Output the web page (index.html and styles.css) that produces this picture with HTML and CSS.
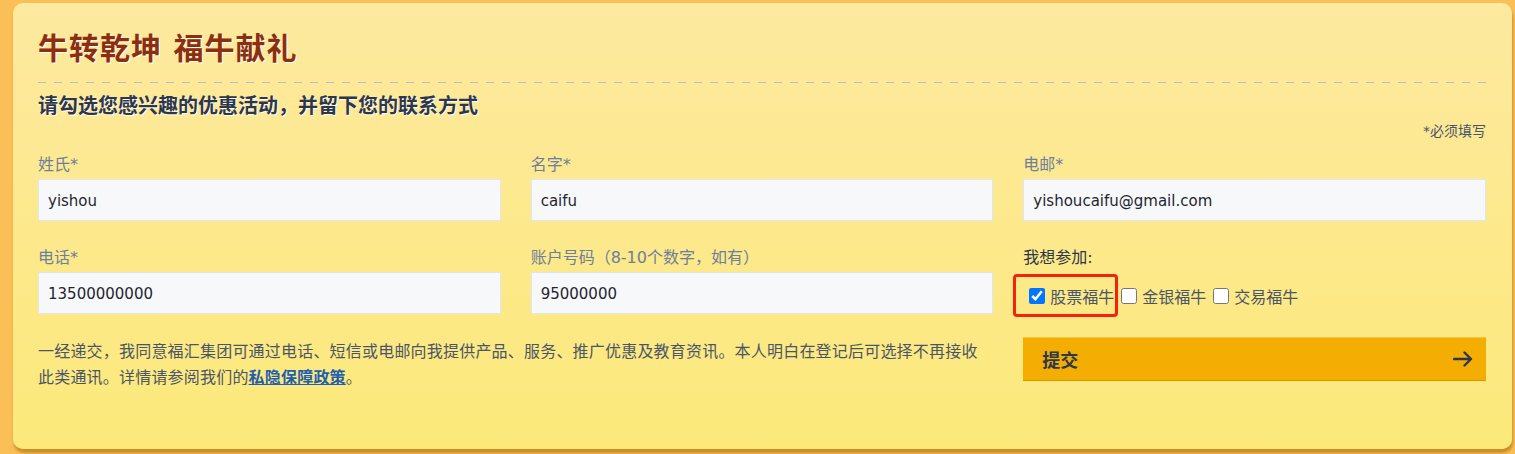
FILE: index.html
```html
<!DOCTYPE html>
<html lang="zh-CN">
<head>
<meta charset="utf-8">
<title>牛转乾坤 福牛献礼</title>
<link rel="stylesheet" href="styles.css">
</head>
<body>
<div class="page">
  <form class="card">
    <h1 class="title">牛转乾坤 福牛献礼</h1>
    <div class="dash"></div>
    <h2 class="subtitle">请勾选您感兴趣的优惠活动，并留下您的联系方式</h2>
    <div class="required">*必须填写</div>
    <div class="grid">
      <div class="field">
        <label class="label">姓氏*</label>
        <input class="input" type="text" value="yishou">
      </div>
      <div class="field">
        <label class="label">名字*</label>
        <input class="input" type="text" value="caifu">
      </div>
      <div class="field">
        <label class="label">电邮*</label>
        <input class="input" type="text" value="yishoucaifu@gmail.com">
      </div>
      <div class="field">
        <label class="label">电话*</label>
        <input class="input" type="text" value="13500000000">
      </div>
      <div class="field">
        <label class="label label-tc">账户号码（8-10个数字，如有）</label>
        <input class="input" type="text" value="95000000">
      </div>
      <div class="field">
        <label class="label label-dark">我想参加:</label>
        <div class="options">
          <label class="opt opt-marked"><input type="checkbox" class="cb" checked><span>股票福牛</span></label>
          <label class="opt"><input type="checkbox" class="cb"><span>金银福牛</span></label>
          <label class="opt"><input type="checkbox" class="cb"><span>交易福牛</span></label>
        </div>
      </div>
      <p class="disclaimer">一经递交，我同意福汇集团可通过电话、短信或电邮向我提供产品、服务、推广优惠及教育资讯。本人明白在登记后可选择不再接收此类通讯。详情请参阅我们的<a class="link" href="#">私隐保障政策</a>。</p>
      <button type="button" class="submit">
        <span>提交</span>
        <svg class="arrow" width="20" height="16" viewBox="0 0 20 16" aria-hidden="true">
          <path d="M1 8 H18 M11.5 1.5 L18 8 L11.5 14.5" fill="none" stroke="#2d3748" stroke-width="2.4" stroke-linecap="round" stroke-linejoin="round"/>
        </svg>
      </button>
    </div>
  </form>
</div>
</body>
</html>
```
FILE: styles.css
```css
html, body {
  margin: 0;
  padding: 0;
}
body {
  background: #fbbf57;
  font-family: "DejaVu Sans", "Noto Sans CJK SC", sans-serif;
  width: 1515px;
  height: 454px;
  overflow: hidden;
}
.page {
  padding: 3px 3px 0 13px;
}
.card {
  box-sizing: border-box;
  width: 1499px;
  height: 446px;
  padding: 28px 26px 0 25px;
  border-radius: 10px;
  background: linear-gradient(180deg, #fde99f 0%, #fce97a 100%);
  box-shadow: 1px 4px 3px rgba(160, 100, 10, 0.55);
}
.title {
  margin: 0 0 15px;
  font-family: "DejaVu Sans", "Noto Sans CJK SC", sans-serif;
  font-size: 30px;
  line-height: 36px;
  font-weight: 700;
  letter-spacing: 1px;
  color: #8b2f0f;
  text-shadow: 1px 1px 0 #ffffff;
}
.dash {
  height: 1px;
  background: repeating-linear-gradient(90deg, #b7bdc6 0 8px, transparent 8px 16px);
}
.subtitle {
  margin: 8px 0 0;
  font-family: "Noto Sans CJK SC", sans-serif;
  font-size: 20px;
  line-height: 28px;
  font-weight: 700;
  color: #2d3748;
  text-shadow: 1px 1px 0 #ffffff;
}
.required {
  margin-top: 2px;
  text-align: right;
  font-size: 14px;
  line-height: 20px;
  color: #4a5568;
}
.grid {
  margin-top: 10px;
  display: grid;
  grid-template-columns: repeat(3, 1fr);
  column-gap: 30px;
  row-gap: 23px;
  align-items: start;
}
.field {
  display: flex;
  flex-direction: column;
  gap: 4px;
}
.label {
  padding-top: 4px;
  font-size: 16px;
  line-height: 20px;
  color: #6e7e9c;
}
.label-tc {
  font-family: "DejaVu Sans", "Noto Sans CJK TC", sans-serif;
}
.label-dark {
  color: #2d3748;
}
.input {
  box-sizing: border-box;
  height: 42px;
  width: 100%;
  margin: 0;
  padding: 1px 9px 0;
  border: 1px solid #e1e6ee;
  background: #f7f8fa;
  font-family: "DejaVu Sans", "Noto Sans CJK SC", sans-serif;
  font-size: 15px;
  color: #1f2530;
  outline: none;
}
.options {
  box-sizing: border-box;
  height: 42px;
  padding: 5px 0 0 6px;
  display: flex;
  align-items: center;
  gap: 7px;
}
.opt {
  position: relative;
  display: flex;
  align-items: center;
  gap: 5px;
  font-family: "Noto Sans CJK SC", sans-serif;
  font-size: 16px;
  line-height: 22px;
  color: #4a5568;
}
.opt-marked::after {
  content: "";
  position: absolute;
  left: -16px;
  right: -4px;
  top: -11px;
  bottom: -10px;
  border: 3px solid #f4230f;
  border-radius: 4px;
  pointer-events: none;
}
.cb {
  width: 16px;
  height: 16px;
  margin: 0;
}
.disclaimer {
  grid-column: 1 / span 2;
  width: 945px;
  margin: 0;
  font-family: "Noto Sans CJK TC", sans-serif;
  font-size: 16px;
  letter-spacing: 0.2px;
  line-height: 26px;
  color: #4a5568;
}
.link {
  color: #1f5fae;
  font-weight: 700;
  text-decoration: underline;
}
.submit {
  box-sizing: border-box;
  height: 44px;
  width: 100%;
  margin: 0;
  padding: 0 13px 0 19px;
  display: flex;
  align-items: center;
  justify-content: space-between;
  background: #f4ad03;
  border: none;
  border-top: 1px solid #f8c640;
  border-bottom: 1px solid #d99a00;
  font-family: "Noto Sans CJK SC", sans-serif;
  font-size: 18px;
  font-weight: 700;
  color: #2d3748;
  cursor: pointer;
}
.arrow {
  display: block;
}
```
